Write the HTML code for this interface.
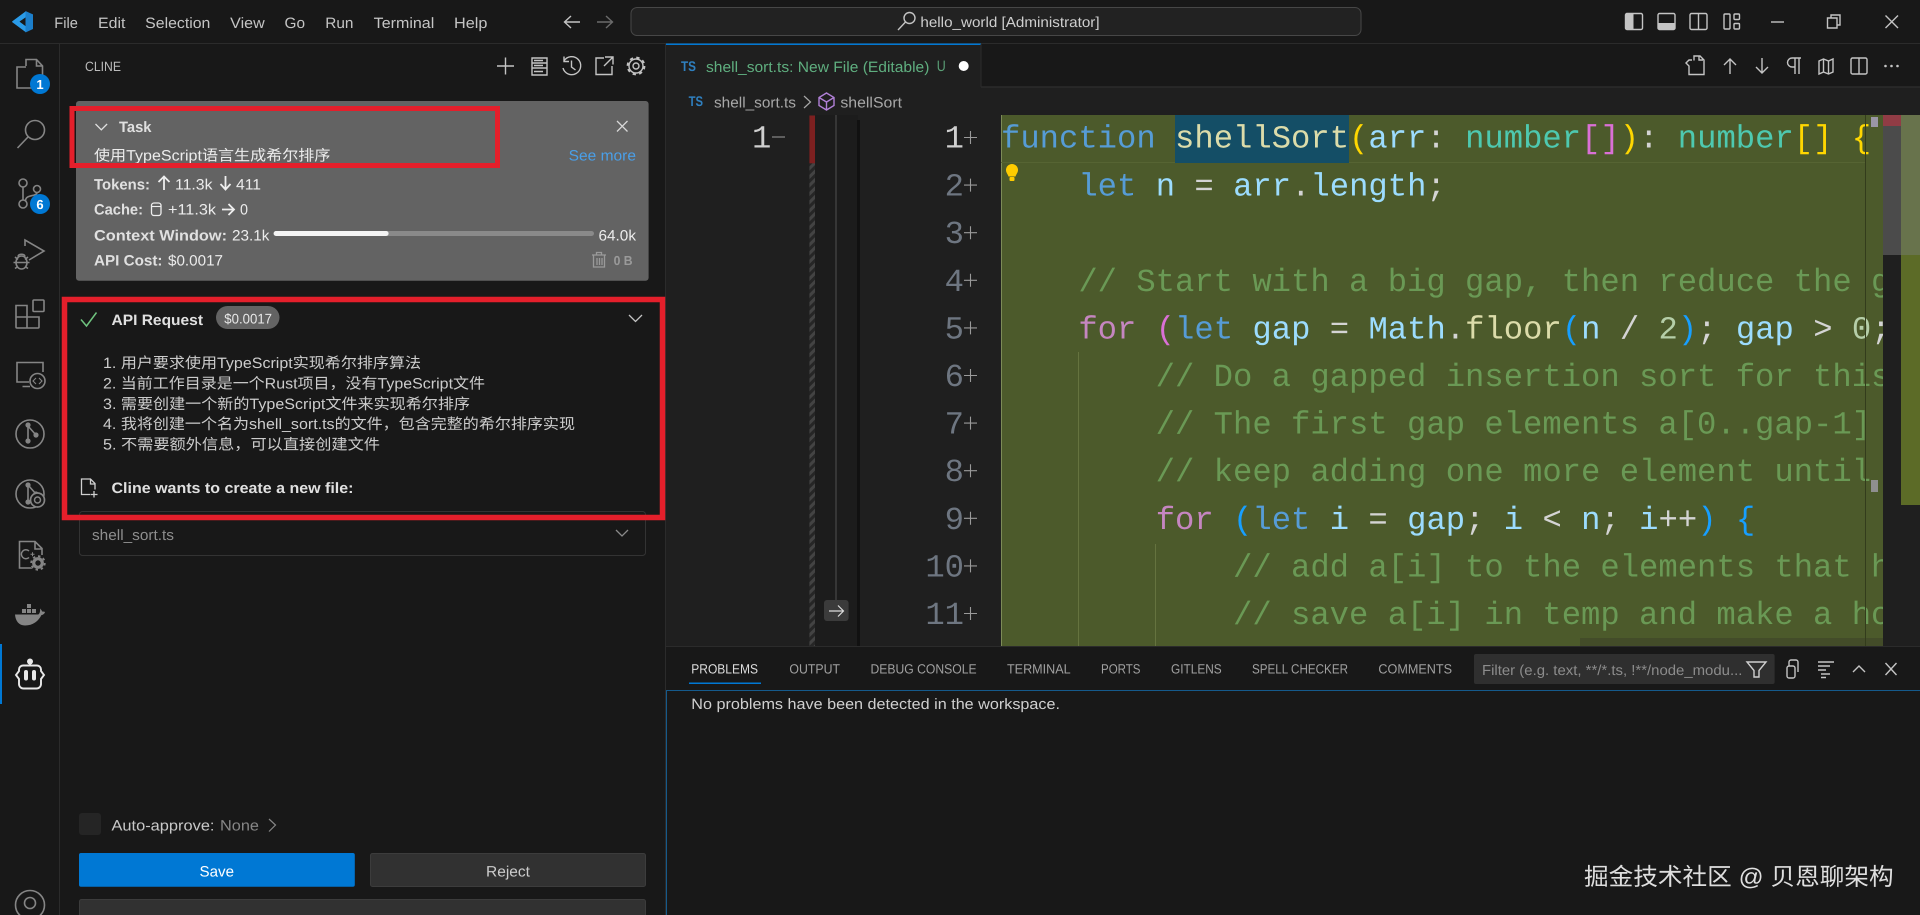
<!DOCTYPE html>
<html lang="en"><head><meta charset="utf-8"><title>hello_world</title>
<style>
html,body{margin:0;padding:0;width:1920px;height:915px;overflow:hidden;background:#181818}
svg{display:block;position:absolute;left:0;top:0}
text{font-family:"Liberation Sans","Noto Sans CJK SC",sans-serif;font-size:15px;fill:#ccc;text-rendering:geometricPrecision;white-space:pre}
.b{font-weight:700;fill:#e0e0e0}
.w{fill:#ececec}
.m{font-size:15px;fill:#c4c4c4}
.t{font-size:13.5px;fill:#a0a0a0}
.ts{font-weight:700;font-size:14px;fill:#2f80c0}
.c{font-family:"Liberation Mono",monospace;font-size:32.22px;fill:#d4d4d4}
.n{font-family:"Liberation Mono",monospace;font-size:32.22px;fill:#6e7681;text-anchor:end}
.i{fill:none;stroke:#858585;stroke-width:1.6}
.u{fill:none;stroke:#c4c4c4;stroke-width:1.4}
.kw{fill:#569cd6}.fn{fill:#dcdcaa}.va{fill:#9cdcfe}.ty{fill:#4ec9b0}.cm{fill:#6a9955}.ct{fill:#c586c0}.nu{fill:#b5cea8}.go{fill:#ffd700}.pk{fill:#da70d6}.bl{fill:#179fff}
</style></head><body>
<svg width="1920" height="915" viewBox="0 0 1920 915" xmlns="http://www.w3.org/2000/svg">
<defs>
<pattern id="h" width="6" height="6" patternUnits="userSpaceOnUse" patternTransform="rotate(-45)"><rect width="6" height="6" fill="#262626"/><rect width="6" height="3" fill="#434343"/></pattern>
<clipPath id="cl"><rect x="1001" y="115" width="882" height="531"/></clipPath>
<clipPath id="cn"><rect x="900" y="115" width="101" height="531"/></clipPath>
</defs>
<rect width="1920" height="915" fill="#181818"/>

<!-- Title bar -->
<path d="M0 43.5H1920" stroke="#2b2b2b"/>
<path d="M25.5 11.5L12 21.5 16 25 25.5 17.5V26L16 19l-4 3 13.5 10 7.5-3.500v-14z" fill="#2a9be8"/>
<path d="M25.5 11v21.500l7.500-3.500V14.500z" fill="#1c7fcb"/>
<path d="M25.500 17.500L19.500 21.500 25.500 26z" fill="#181818"/>
<text class="m" x="54.300" y="28" textLength="23.600" lengthAdjust="spacingAndGlyphs">File</text>
<text class="m" x="98" y="28" textLength="27.400" lengthAdjust="spacingAndGlyphs">Edit</text>
<text class="m" x="145.200" y="28" textLength="65.200" lengthAdjust="spacingAndGlyphs">Selection</text>
<text class="m" x="230.200" y="28" textLength="34.500" lengthAdjust="spacingAndGlyphs">View</text>
<text class="m" x="284.500" y="28" textLength="20.500" lengthAdjust="spacingAndGlyphs">Go</text>
<text class="m" x="325.300" y="28" textLength="28.200" lengthAdjust="spacingAndGlyphs">Run</text>
<text class="m" x="373.700" y="28" textLength="60.600" lengthAdjust="spacingAndGlyphs">Terminal</text>
<text class="m" x="454" y="28" textLength="33.400" lengthAdjust="spacingAndGlyphs">Help</text>
<path class="u" d="M565 22H580M571 16l-6.500 6 6.500 6"/>
<path d="M597 22H612M606 16l6.500 6-6.500 6" fill="none" stroke="#6b6b6b" stroke-width="1.400"/>
<rect x="631" y="7.500" width="730" height="28" rx="6" fill="#222" stroke="#474747"/>
<circle cx="909.500" cy="18" r="5.500" class="u"/><path class="u" d="M905.500 22L898 30"/>
<text x="920.400" y="27" textLength="179.200" lengthAdjust="spacingAndGlyphs" style="font-size:14.500px;fill:#cfcfcf">hello_world [Administrator]</text>
<!-- layout icons -->
<rect x="1625.500" y="13.500" width="17" height="16" rx="1.500" class="u"/><rect x="1625.500" y="13.500" width="8" height="16" fill="#c4c4c4"/>
<rect x="1658" y="13.500" width="17" height="16" rx="1.500" class="u"/><rect x="1658" y="23" width="17" height="6.500" fill="#c4c4c4"/>
<rect x="1690" y="13.500" width="17" height="16" rx="1.500" class="u"/><path class="u" d="M1698.500 13.500v16"/>
<rect x="1724" y="14" width="6" height="15" rx="1" class="u"/><rect x="1734" y="14" width="5.500" height="5.500" rx="1" class="u"/><rect x="1734" y="23.500" width="5.500" height="5.500" rx="1" class="u"/>
<path class="u" d="M1771 22H1784"/>
<path class="u" d="M1827.500 18h9.500v10h-9.500zM1831 18v-3h9v10h-3"/>
<path class="u" d="M1885.500 15.500l12.500 12.500M1898 15.500L1885.500 28"/>

<!-- Activity bar -->
<path d="M59.500 44V915" stroke="#2b2b2b"/>
<g class="i">
<path d="M26 66V59.500h10.500l6 6.500v14H34M36.500 59.500V66h6"/>
<path d="M26 67H17V88H34V80"/>
<circle cx="35" cy="130" r="9.500"/><path d="M28 137L17.500 148"/>
<circle cx="23" cy="183" r="4"/><circle cx="37" cy="189" r="3.500"/><circle cx="23" cy="204" r="4"/>
<path d="M23 187V200M37 192.500C37 197 26 194 25.500 200.500"/>
<path d="M25 246V240L44 251 29 260"/>
<ellipse cx="21.500" cy="262.500" rx="5.500" ry="6.500"/><path d="M16 262.500H27M15 257l3 2.500M28 257l-3 2.500M13.500 262.500H16M27 262.500h2.500M15 268.500l3-2M28 268.500l-3-2M18 256.500c0-3 7-3 7 0"/>
<rect x="33" y="300" width="11" height="11.500" rx="1"/>
<path d="M16 305.500H27V328H17a1 1 0 0 1-1-1zM16 317H39V327a1 1 0 0 1-1 1H27"/>
<path d="M29 382H17V362.500H43V372M22.500 386.500H30"/>
<circle cx="37.500" cy="381" r="7.500"/>
<path d="M36 378l-3 3 3 3M39 378l3 3-3 3" stroke-width="1.100"/>
<circle cx="30" cy="434" r="14"/>
<path d="M28 425V441M28 426L36 435"/>
<circle cx="30" cy="494" r="14"/>
<path d="M28 485V502M28 485l8 9"/>
<path d="M36 568H19.500V541.500H35l7 7V555M35 541.500V549h7"/>
<path d="M29 551a4.500 4.500 0 1 0 0 6.500" stroke-width="1.500"/>
<path d="M30.500 554.300h4M32.500 552.300v4" stroke-width="1"/>
<circle cx="30" cy="905" r="14.500"/><circle cx="30" cy="903" r="5.500"/>
</g>
<g fill="#858585">
<circle cx="28" cy="425" r="2.600"/><circle cx="36" cy="435" r="2.600"/><circle cx="28" cy="441" r="2.600"/>
<circle cx="28" cy="485" r="2.600"/><circle cx="36" cy="494" r="2.600"/><circle cx="28" cy="502" r="2.600"/>
<rect x="27" y="604" width="4" height="4"/><rect x="22" y="609" width="4" height="4"/><rect x="27" y="609" width="4" height="4"/><rect x="32" y="609" width="4" height="4"/>
<path d="M15 614.500H38c1.500 0 2.500-3.500 2-6 1 1 2 2 2 3 1 0 2.500 0 3 .5-.500 2-2.500 3-3.500 3C38.500 621 33 625.500 25 625.500 19 625.500 15.500 621 15 614.500z"/>
</g>
<circle cx="37.500" cy="500" r="7" fill="#181818" stroke="#858585" stroke-width="1.700"/><circle cx="37.500" cy="500" r="3" fill="none" stroke="#858585" stroke-width="1.500"/>
<circle cx="38" cy="563" r="8" fill="#181818"/>
<circle cx="38" cy="563" r="4.300" fill="none" stroke="#858585" stroke-width="3.200"/><circle cx="38" cy="563" r="6.800" fill="none" stroke="#858585" stroke-width="1.800" stroke-dasharray="2.500 2.800"/>
<rect x="0" y="644" width="2" height="60" fill="#0078d4"/>
<!-- Cline bot -->
<path d="M23 665.500H37a4 4 0 0 1 4 4V671l3 4-3 4v5a4.500 4.500 0 0 1-4.500 4.500H23.500A4.500 4.500 0 0 1 19 684V679l-3-4 3-4v-1.500a4 4 0 0 1 4-4z" fill="none" stroke="#e8e8e8" stroke-width="1.900"/>
<circle cx="30" cy="661.500" r="3" fill="#e8e8e8"/><rect x="29" y="661" width="2" height="5" fill="#e8e8e8"/>
<rect x="24" y="670" width="4" height="10.500" rx="2" fill="#e8e8e8"/><rect x="32" y="670" width="4" height="10.500" rx="2" fill="#e8e8e8"/>
<!-- badges -->
<circle cx="40" cy="84" r="10" fill="#0078d4"/><text x="40" y="89" text-anchor="middle" style="font-size:13px;font-weight:700;fill:#fff">1</text>
<circle cx="40" cy="204" r="10" fill="#0078d4"/><text x="40" y="209" text-anchor="middle" style="font-size:13px;font-weight:700;fill:#fff">6</text>

<!-- Sidebar header -->
<text x="85" y="71" textLength="36" lengthAdjust="spacingAndGlyphs" style="font-size:13.500px;fill:#bbb">CLINE</text>
<g class="u">
<path d="M505.500 57.500v17M497 66h17"/>
<path d="M532 58h15v5h-15zM532 63h15v5h-15zM532 68h15v7h-15zM534 60.500h9M534 65.500h9M534 71.500h9"/>
<path d="M564 61a9 9 0 1 1-1 7M564 56.500v5h5M571.500 60.500V67l4 3"/>
<path d="M604 58h-8v16.500h16V66M605 57h8v7.500M613 57l-9 9"/>
<circle cx="636" cy="66" r="3"/>
<circle cx="636" cy="66" r="7"/>
<circle cx="636" cy="66" r="8.500" stroke-dasharray="3.340 3.340" stroke-width="1.800"/>
</g>

<!-- Task card -->
<rect x="76" y="101" width="572.600" height="179.700" rx="3" fill="#636363"/>
<path d="M95.500 124l5.800 5.800 5.800-5.800" fill="none" stroke="#e0e0e0" stroke-width="1.300"/>
<text class="b" x="119" y="132" textLength="32.500" lengthAdjust="spacingAndGlyphs">Task</text>
<path d="M617 121l10.500 10.500M627.500 121L617 131.500" stroke="#d8d8d8" stroke-width="1.300"/>
<text class="w" x="94" y="160.500" textLength="236.400" lengthAdjust="spacingAndGlyphs">使用TypeScript语言生成希尔排序</text>
<text x="568.600" y="160.500" textLength="67.400" lengthAdjust="spacingAndGlyphs" style="fill:#4a9fe8">See more</text>
<text class="b" x="94" y="189.500" textLength="56" lengthAdjust="spacingAndGlyphs">Tokens:</text>
<path d="M164 190V176.500M158.500 182l5.500-5.500 5.500 5.500" fill="none" stroke="#eee" stroke-width="1.800"/>
<text class="w" x="175" y="189.500" textLength="37.500" lengthAdjust="spacingAndGlyphs">11.3k</text>
<path d="M225.500 176v13.500M220.500 184l5 5.500 5-5.500" fill="none" stroke="#eee" stroke-width="1.800"/>
<text class="w" x="236" y="189.500" textLength="25" lengthAdjust="spacingAndGlyphs">411</text>
<text class="b" x="94" y="214.500" textLength="49" lengthAdjust="spacingAndGlyphs">Cache:</text>
<rect x="151.500" y="203" width="9.500" height="12.500" rx="2.500" fill="none" stroke="#eee" stroke-width="1.300"/><path d="M151.500 206.500h9.500" stroke="#eee" stroke-width="1.100"/>
<text class="w" x="168" y="214.500" textLength="48" lengthAdjust="spacingAndGlyphs">+11.3k</text>
<path d="M222 209.500h12.500M228.500 204l5.500 5.500-5.500 5.500" fill="none" stroke="#eee" stroke-width="1.800"/>
<text class="w" x="240" y="214.500" textLength="8" lengthAdjust="spacingAndGlyphs">0</text>
<text class="b" x="94" y="240.500" textLength="133" lengthAdjust="spacingAndGlyphs">Context Window:</text>
<text class="w" x="232" y="240.500" textLength="37.400" lengthAdjust="spacingAndGlyphs">23.1k</text>
<rect x="273.600" y="231" width="320.400" height="5" rx="2.500" fill="#8a8a8a"/>
<rect x="273.600" y="231" width="115" height="5" rx="2.500" fill="#f4f4f4"/>
<text class="w" x="598.500" y="240.500" textLength="37.500" lengthAdjust="spacingAndGlyphs">64.0k</text>
<text class="b" x="94" y="265.500" textLength="68.500" lengthAdjust="spacingAndGlyphs">API Cost:</text>
<text class="w" x="168" y="265.500" textLength="55" lengthAdjust="spacingAndGlyphs">$0.0017</text>
<path d="M592 255h14M596.500 255v-2.500h5v2.500M593.500 255.500v11.500h11v-11.500M597 258v7M599.500 258v7M602 258v7" fill="none" stroke="#9a9a9a" stroke-width="1.300"/>
<text x="613.600" y="265" textLength="19" lengthAdjust="spacingAndGlyphs" style="font-size:13px;font-weight:700;fill:#9a9a9a">0 B</text>

<!-- API Request -->
<path d="M81 319.500l5.500 6.500L96.500 312.500" fill="none" stroke="#6fc37f" stroke-width="1.500"/>
<text class="b" x="111.500" y="325" textLength="91.500" lengthAdjust="spacingAndGlyphs">API Request</text>
<rect x="216" y="306" width="63.500" height="23" rx="11.500" fill="#636363"/>
<text x="224.300" y="323.500" textLength="47.700" lengthAdjust="spacingAndGlyphs" style="font-size:14px;fill:#e8e8e8">$0.0017</text>
<path d="M629 315l6.500 6.500 6.500-6.500" fill="none" stroke="#c4c4c4" stroke-width="1.300"/>
<text x="103" y="368" textLength="318" lengthAdjust="spacingAndGlyphs">1. 用户要求使用TypeScript实现希尔排序算法</text>
<text x="103" y="388.500" textLength="382" lengthAdjust="spacingAndGlyphs">2. 当前工作目录是一个Rust项目，没有TypeScript文件</text>
<text x="103" y="409" textLength="367" lengthAdjust="spacingAndGlyphs">3. 需要创建一个新的TypeScript文件来实现希尔排序</text>
<text x="103" y="429" textLength="472" lengthAdjust="spacingAndGlyphs">4. 我将创建一个名为shell_sort.ts的文件，包含完整的希尔排序实现</text>
<text x="103" y="449.500" textLength="277" lengthAdjust="spacingAndGlyphs">5. 不需要额外信息，可以直接创建文件</text>
<path d="M90 494.500H81.500V479H90.500L95 483.500V489.500M90.500 479V484H95M94 491v6.500M90.500 494.500h7" fill="none" stroke="#cfcfcf" stroke-width="1.300"/>
<text class="b" x="111.500" y="493" textLength="242" lengthAdjust="spacingAndGlyphs">Cline wants to create a new file:</text>
<rect x="79.500" y="511.500" width="566" height="44" rx="3" fill="#181818" stroke="#333"/>
<text x="92" y="540" textLength="82" lengthAdjust="spacingAndGlyphs" style="fill:#8e8e8e">shell_sort.ts</text>
<path d="M616 530l6 6 6-6" fill="none" stroke="#8a8a8a" stroke-width="1.300"/>

<!-- footer of sidebar -->
<rect x="79" y="813" width="22" height="22" rx="3" fill="#252525"/>
<text x="111.500" y="830.500" textLength="103" lengthAdjust="spacingAndGlyphs" style="fill:#c8c8c8">Auto-approve:</text>
<text x="220" y="830.500" textLength="39" lengthAdjust="spacingAndGlyphs" style="fill:#868686">None</text>
<path d="M269 819l6.500 6-6.500 6.500" fill="none" stroke="#868686" stroke-width="1.200"/>
<rect x="79" y="853" width="275.800" height="33.700" rx="2" fill="#0078d4"/>
<text x="199.500" y="876.500" textLength="34.500" lengthAdjust="spacingAndGlyphs" style="fill:#fff">Save</text>
<rect x="370.500" y="853.500" width="275" height="33" rx="2" fill="#313131" stroke="#3c3c3c"/>
<text x="486" y="876.500" textLength="44" lengthAdjust="spacingAndGlyphs" style="fill:#ccc">Reject</text>
<rect x="79.500" y="899.500" width="566" height="20" rx="2" fill="#313131" stroke="#3c3c3c"/>

<!-- Editor -->
<rect x="666" y="44" width="1254" height="602" fill="#181818"/>
<path d="M665.500 44V915" stroke="#2b2b2b"/>
<rect x="666" y="87" width="1254" height="559" fill="#1f1f1f"/>
<path d="M981 87H1920" stroke="#2b2b2b" stroke-width="1.500"/>
<rect x="666" y="44" width="315" height="44" fill="#1f1f1f"/>
<rect x="666" y="43.500" width="315" height="1.500" fill="#0078d4"/>
<path d="M981 44V87" stroke="#2b2b2b"/>
<text class="ts" x="681" y="71" textLength="15" lengthAdjust="spacingAndGlyphs">TS</text>
<text x="706" y="72" textLength="223.400" lengthAdjust="spacingAndGlyphs" style="fill:#5fae7f">shell_sort.ts: New File (Editable)</text>
<text x="936.700" y="71" textLength="9" lengthAdjust="spacingAndGlyphs" style="fill:#5a9f76">U</text>
<circle cx="963.700" cy="66" r="5" fill="#fff"/>
<!-- toolbar -->
<g class="u">
<path d="M1692 60h-3l-3 3 3 3v8.500h15v-14.500l-4-4h-6v4.500M1699 56v4h4"/>
<path d="M1730 74V59M1724 65l6-6 6 6"/>
<path d="M1762 58V73M1756 67l6 6 6-6"/>
<path d="M1795 58v16M1799 58v16M1801 58h-9a4.500 4.500 0 0 0 0 9h3"/>
<path d="M1819 61l4.500-2 5 2 4.500-2v13l-4.500 2-5-2-4.500 2zM1823.500 59v13M1828.500 61v13"/>
<rect x="1851" y="58" width="16" height="16" rx="1.500"/><path d="M1859 58v16"/>
</g>
<g fill="#c4c4c4"><circle cx="1885.500" cy="66" r="1.300"/><circle cx="1891.500" cy="66" r="1.300"/><circle cx="1897.500" cy="66" r="1.300"/></g>
<!-- breadcrumb -->
<text class="ts" x="688.600" y="106" textLength="14.400" lengthAdjust="spacingAndGlyphs">TS</text>
<text x="714" y="107.500" textLength="82" lengthAdjust="spacingAndGlyphs" style="fill:#a8a8a8">shell_sort.ts</text>
<path d="M804 96l6.500 6-6.500 6" fill="none" stroke="#a8a8a8" stroke-width="1.200"/>
<path d="M826.500 93l7.500 4.500v8l-7.500 4.500-7.500-4.500v-8zM819 97.500l7.500 4.500 7.500-4.500M826.500 102v8" fill="none" stroke="#b180d7" stroke-width="1.400"/>
<text x="840.400" y="107.500" textLength="61.600" lengthAdjust="spacingAndGlyphs" style="fill:#a8a8a8">shellSort</text>

<!-- Diff left -->
<rect x="815" y="115" width="43" height="531" fill="#1c1c1c"/>
<rect x="809.400" y="163" width="5.600" height="483" fill="url(#h)"/>
<rect x="809.400" y="115.500" width="5.600" height="47.800" fill="#7d2020"/>
<path d="M836 115V600" stroke="#505050"/>
<rect x="857" y="120" width="3" height="526" fill="#111"/>
<text x="771.400" y="147.500" style="font-family:'Liberation Mono',monospace;font-size:32.220px;fill:#cfcfcf;text-anchor:end">1</text>
<path d="M772 137H785" stroke="#888" stroke-width="1.200"/>
<rect x="824" y="600" width="24.600" height="21" rx="3" fill="#3b3b3b"/>
<path d="M829 611H843M838 605.500l5.500 5.500-5.500 5.500" fill="none" stroke="#ddd" stroke-width="1.200"/>

<!-- Line numbers -->
<g clip-path="url(#cn)">
<text class="n" x="964" y="147.500" style="fill:#cfcfcf">1</text>
<text class="n" x="964" y="195.600">2</text>
<text class="n" x="964" y="243.200">3</text>
<text class="n" x="964" y="290.800">4</text>
<text class="n" x="964" y="338.400">5</text>
<text class="n" x="964" y="386">6</text>
<text class="n" x="964" y="433.600">7</text>
<text class="n" x="964" y="481.200">8</text>
<text class="n" x="964" y="528.800">9</text>
<text class="n" x="964" y="576.400">10</text>
<text class="n" x="964" y="624">11</text>
</g>
<path d="M964 137.500h13M970.500 131v13M964 185.100h13M970.500 178.600v13M964 232.700h13M970.500 226.200v13M964 280.300h13M970.500 273.800v13M964 327.900h13M970.500 321.400v13M964 375.500h13M970.500 369v13M964 423.100h13M970.500 416.600v13M964 470.700h13M970.500 464.200v13M964 518.300h13M970.500 511.800v13M964 565.900h13M970.500 559.400v13M964 613.500h13M970.500 607v13" stroke="#9a9a9a" stroke-width="1.100"/>

<!-- Code area -->
<rect x="1001" y="115" width="882" height="531" fill="#4c5a2b"/>
<path d="M1001.500 115V646" stroke="#7d8b58"/>
<path d="M1001 162.500H1865" stroke="#566433"/>
<rect x="1175" y="115" width="174" height="48" fill="#144e66"/>
<path d="M1078.500 352V646M1155.500 544V646" stroke="#65733f"/>
<rect x="1580" y="638" width="303" height="8" fill="#434c29"/>
<g clip-path="url(#cl)">
<text class="c" x="1001" y="147.500"><tspan class="kw">function</tspan> <tspan class="fn">shellSort</tspan><tspan class="go">(</tspan><tspan class="va">arr</tspan>: <tspan class="ty">number</tspan><tspan class="pk">[]</tspan><tspan class="go">)</tspan>: <tspan class="ty">number</tspan><tspan class="go">[] {</tspan></text>
<text class="c" x="1001" y="195.600">    <tspan class="kw">let</tspan> <tspan class="va">n</tspan> = <tspan class="va">arr</tspan>.<tspan class="va">length</tspan>;</text>
<text class="c cm" x="1001" y="290.800">    // Start with a big gap, then reduce the gap</text>
<text class="c" x="1001" y="338.400">    <tspan class="ct">for</tspan> <tspan class="pk">(</tspan><tspan class="kw">let</tspan> <tspan class="va">gap</tspan> = <tspan class="va">Math</tspan>.<tspan class="fn">floor</tspan><tspan class="bl">(</tspan><tspan class="va">n</tspan> / <tspan class="nu">2</tspan><tspan class="bl">)</tspan>; <tspan class="va">gap</tspan> &gt; <tspan class="nu">0</tspan>; <tspan class="va">gap</tspan></text>
<text class="c cm" x="1001" y="386">        // Do a gapped insertion sort for this gap size.</text>
<text class="c cm" x="1001" y="433.600">        // The first gap elements a[0..gap-1] are already in gapped order</text>
<text class="c cm" x="1001" y="481.200">        // keep adding one more element until the entire array is gap sorted</text>
<text class="c" x="1001" y="528.800">        <tspan class="ct">for</tspan> <tspan class="bl">(</tspan><tspan class="kw">let</tspan> <tspan class="va">i</tspan> = <tspan class="va">gap</tspan>; <tspan class="va">i</tspan> &lt; <tspan class="va">n</tspan>; <tspan class="va">i</tspan>++<tspan class="bl">) {</tspan></text>
<text class="c cm" x="1001" y="576.400">            // add a[i] to the elements that have been gap sorted</text>
<text class="c cm" x="1001" y="624">            // save a[i] in temp and make a hole at position i</text>
</g>
<!-- bulb -->
<path d="M1012 164a6 6 0 0 1 6 6c0 2.800-1.800 4-2.500 6.500h-7c-.7-2.500-2.500-3.700-2.500-6.500a6 6 0 0 1 6-6z" fill="#ffcc00"/><rect x="1009.500" y="177" width="5" height="4" rx="1" fill="#ffcc00"/>
<!-- overview -->
<path d="M1865.500 115V646" stroke="#333c1c"/>
<rect x="1871" y="117" width="7" height="10" fill="#9a96a6"/>
<rect x="1871" y="480" width="7" height="12" fill="#8f8f8f"/>
<rect x="1883" y="115" width="37" height="531" fill="#1f1f1f"/>
<rect x="1883" y="115" width="18" height="140" fill="#4b4b4b"/>
<rect x="1883" y="115" width="18" height="11" fill="#913c45"/>
<rect x="1901" y="115" width="19" height="140" fill="#68734c"/>
<rect x="1901" y="255" width="19" height="250" fill="#5c6b27"/>

<!-- Panel -->
<rect x="666" y="646" width="1254" height="269" fill="#181818"/>
<path d="M666 646.500H1920" stroke="#2b2b2b"/>
<text class="t" x="691.300" y="673.300" textLength="66.700" lengthAdjust="spacingAndGlyphs" style="fill:#ddd">PROBLEMS</text>
<text class="t" x="789.400" y="673.300" textLength="50.600" lengthAdjust="spacingAndGlyphs">OUTPUT</text>
<text class="t" x="870.500" y="673.300" textLength="106.100" lengthAdjust="spacingAndGlyphs">DEBUG CONSOLE</text>
<text class="t" x="1007" y="673.300" textLength="63.600" lengthAdjust="spacingAndGlyphs">TERMINAL</text>
<text class="t" x="1101" y="673.300" textLength="39.500" lengthAdjust="spacingAndGlyphs">PORTS</text>
<text class="t" x="1171" y="673.300" textLength="50.700" lengthAdjust="spacingAndGlyphs">GITLENS</text>
<text class="t" x="1252" y="673.300" textLength="96" lengthAdjust="spacingAndGlyphs">SPELL CHECKER</text>
<text class="t" x="1378.400" y="673.300" textLength="73.600" lengthAdjust="spacingAndGlyphs">COMMENTS</text>
<rect x="689" y="682.500" width="72" height="1.500" fill="#0078d4"/>
<rect x="1474" y="654" width="300.600" height="30" rx="2" fill="#2f2f2f"/>
<text x="1482" y="675" textLength="260.400" lengthAdjust="spacingAndGlyphs" style="font-size:14.500px;fill:#8c8c8c">Filter (e.g. text, **/*.ts, !**/node_modu...</text>
<path d="M1747 662H1766L1759 670.500V677H1754V670.500Z" fill="none" stroke="#cfcfcf" stroke-width="1.400"/>
<g class="u">
<path d="M1789 666v-4a2 2 0 0 1 2-2h5a2 2 0 0 1 2 2v10M1787 668a2 2 0 0 1 2-2h4a2 2 0 0 1 2 2v8a2 2 0 0 1-2 2h-4a2 2 0 0 1-2-2z"/>
<path d="M1818 662H1834M1818 666H1830M1818 670H1826M1821 674H1830M1821 677.500H1826"/>
<path d="M1853 672l6-6 6 6"/>
<path d="M1885.500 663l11 12M1896.500 663l-11 12"/>
</g>
<path d="M666.500 915V690.500H1920" fill="none" stroke="#155a8c"/>
<text x="691.300" y="709" textLength="368.700" lengthAdjust="spacingAndGlyphs" style="fill:#cfcfcf">No problems have been detected in the workspace.</text>
<text x="1584" y="885" textLength="309.600" lengthAdjust="spacingAndGlyphs" style="font-size:24px;fill:#dedede">掘金技术社区 @ 贝恩聊架构</text>

<!-- Red annotations -->
<rect x="72" y="108.500" width="425.500" height="57" fill="none" stroke="#e41f2b" stroke-width="5"/>
<rect x="64.500" y="299.500" width="598" height="218" fill="none" stroke="#e41f2b" stroke-width="5.500"/>
</svg>
</body></html>
